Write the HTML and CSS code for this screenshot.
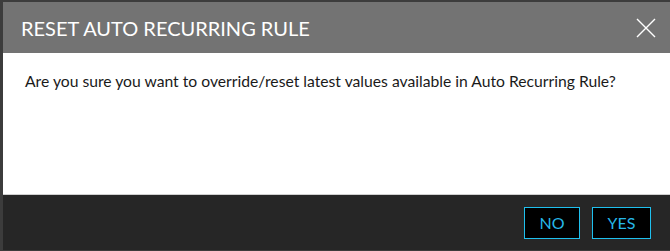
FILE: index.html
```html
<!DOCTYPE html>
<html lang="en">

<head>
    <meta charset="UTF-8">
    <title>Reset Auto Recurring Rule</title>
    <link rel="stylesheet" href="styles.css">
</head>

<body>

    <div class="modal">
        <div class="modal-header">
            <h2 class="modal-title">RESET AUTO RECURRING RULE</h2>
            <button type="button" class="close" aria-label="Close">
                <svg width="20" height="20" viewBox="0 0 20 20">
                    <path d="M1 1 L19 19 M19 1 L1 19" stroke="#fff" stroke-width="1.4" fill="none" />
                </svg>
            </button>
        </div>
        <div class="modal-body">
            <p>Are you sure you want to override/reset latest values available in Auto Recurring Rule?</p>
        </div>
        <div class="modal-footer">
            <button type="button" class="btn">NO</button>
            <button type="button" class="btn btn-yes">YES</button>
        </div>
    </div>

</body>

</html>
```

FILE: styles.css
```css
body {
    font-family: Lato, "Liberation Sans", sans-serif;
    background-color: #3c3c3c;
    margin: 0;
    padding: 0;
}

.modal {
    margin: 2px 0 0 3px;
    background-color: #fff;
}

.modal-header {
    height: 51px;
    background-color: #737373;
    display: flex;
    align-items: center;
    justify-content: space-between;
    padding: 0 14px 0 18px;
}

.modal-title {
    margin: 0;
    color: #fff;
    font-size: 20px;
    font-weight: normal;
}

.close {
    background: none;
    border: none;
    padding: 0;
    width: 20px;
    height: 20px;
    cursor: pointer;
}

.close svg {
    display: block;
}

.modal-body {
    height: 141px;
    border-bottom: 1px solid #d0d0d0;
    padding: 0 22px;
}

.modal-body p {
    margin: 0;
    padding-top: 19px;
    font-size: 15.7px;
    color: #1a1a1a;
}

.modal-footer {
    height: 55px;
    background-color: #262626;
    display: flex;
    align-items: center;
    justify-content: flex-end;
    gap: 12px;
    padding: 0 19px 0 0;
}

.btn {
    height: 32px;
    width: 56px;
    background-color: #000;
    color: #26b8e8;
    border: 1px solid #1fc0ee;
    font-family: Lato, "Liberation Sans", sans-serif;
    font-size: 16px;
    padding: 0;
    cursor: pointer;
}

.btn-yes {
    width: 59px;
}
```
